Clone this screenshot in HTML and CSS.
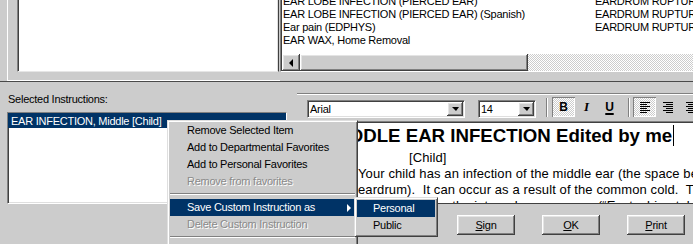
FILE: index.html
```html
<!DOCTYPE html>
<html lang="en">
<head>
  <meta charset="UTF-8" />
  <title>Patient Instructions</title>
  <link rel="stylesheet" href="styles.css">
</head>
<body>
  <div class="window">
    <div class="top">
      <div class="frame">
        <div class="blank"></div>
      </div>
      <div class="list">
        <div class="rows">
          <div class="rows-inner">
            <div class="row"><span class="c1">EAR LOBE INFECTION (PIERCED EAR)</span><span>EARDRUM RUPTURE</span></div>
            <div class="row"><span class="c1">EAR LOBE INFECTION (PIERCED EAR) (Spanish)</span><span>EARDRUM RUPTURE</span></div>
            <div class="row"><span class="c1">Ear pain (EDPHYS)</span><span>EARDRUM RUPTURE</span></div>
            <div class="row"><span class="c1">EAR WAX, Home Removal</span><span></span></div>
          </div>
        </div>
        <div class="hscroll">
          <div class="sb-btn raised"><span class="tri-left"></span></div>
          <div class="sb-thumb raised"></div>
          <div class="sb-track"></div>
        </div>
      </div>
    </div>

    <div class="bottom">
      <div class="left">
        <div class="label">Selected Instructions:</div>
        <div class="sel-list">
          <div class="sel-item">EAR INFECTION, Middle [Child]</div>
        </div>
      </div>

      <div class="right">
        <div class="toolbar">
          <div class="combo font-combo">
            <div class="combo-text">Arial</div>
            <div class="combo-btn raised"><span class="tri-down"></span></div>
          </div>
          <div class="combo size-combo">
            <div class="combo-text">14</div>
            <div class="combo-btn raised"><span class="tri-down"></span></div>
          </div>
          <div class="tb-sep first-sep"></div>
          <div class="tb-btn on"><b class="g-bold">B</b></div>
          <div class="tb-btn"><i class="g-italic">I</i></div>
          <div class="tb-btn"><u class="g-under">U</u></div>
          <div class="tb-sep"></div>
          <div class="tb-btn on">
            <svg width="10" height="11" viewBox="0 0 10 11"><path d="M0 .5h10M0 2.5h7M0 4.5h10M0 6.5h7M0 8.5h10M0 10.5h7" stroke="#000" stroke-width="1"/></svg>
          </div>
          <div class="tb-btn">
            <svg width="10" height="11" viewBox="0 0 10 11"><path d="M0 .5h10M3 2.5h7M0 4.5h10M3 6.5h7M0 8.5h10M3 10.5h7" stroke="#000" stroke-width="1"/></svg>
          </div>
          <div class="tb-btn">
            <svg width="10" height="11" viewBox="0 0 10 11"><path d="M0 .5h10M2 2.5h6M0 4.5h10M2 6.5h6M0 8.5h10M2 10.5h6" stroke="#000" stroke-width="1"/></svg>
          </div>
        </div>

        <div class="editor">
          <div class="doc-title">MIDDLE EAR INFECTION Edited by me<span class="caret"></span></div>
          <div class="doc-sub">[Child]</div>
          <div class="doc-p">Your child has an infection of the middle ear (the space behind the</div>
          <div class="doc-p">eardrum).  It can occur as a result of the common cold.  The</div>
          <div class="doc-p">infection blocks the internal ear passage (“Eustachian tube”).</div>
        </div>

        <div class="actions">
          <div class="btn raised"><u>S</u>ign</div>
          <div class="btn raised"><u>O</u>K</div>
          <div class="btn raised"><u>P</u>rint</div>
        </div>
      </div>
    </div>

    <div class="menu">
      <div class="mi">Remove Selected Item</div>
      <div class="mi">Add to Departmental Favorites</div>
      <div class="mi">Add to Personal Favorites</div>
      <div class="mi off">Remove from favorites</div>
      <div class="sep"></div>
      <div class="mi hl">Save Custom Instruction as<span class="arrow"></span></div>
      <div class="mi off">Delete Custom Instruction</div>
      <div class="sep"></div>
    </div>

    <div class="submenu">
      <div class="mi sub hl">Personal</div>
      <div class="mi sub">Public</div>
    </div>
  </div>
</body>
</html>
```

FILE: styles.css
```css
* {
  box-sizing: border-box;
}
body {
  margin: 0;
  background: #cccccc;
  font-family: "Liberation Sans", Arial, sans-serif;
  font-size: 11px;
  letter-spacing: -0.25px;
  color: #000;
  overflow: hidden;
}
.window {
  position: relative;
  width: 693px;
  height: 244px;
  overflow: hidden;
}
.raised {
  background: #cccccc;
  box-shadow: inset -1px -1px #404040, inset 1px 1px #fff, inset -2px -2px #808080, inset 2px 2px #e4e4e4;
}

/* top part */
.top {
  display: flex;
  height: 82px;
  border-bottom: 1px solid #4a4a4a;
}
.frame {
  margin-left: 7px;
  width: 273px;
  height: 81px;
  border-left: 1px solid #fff;
  border-bottom: 1px solid #fff;
  padding-left: 9px;
}
.blank {
  width: 262px;
  height: 72px;
  background: #fff;
  border-left: 1px solid #808080;
  border-right: 1px solid #404040;
  border-bottom: 1px solid #e6e6e6;
  box-shadow: inset 1px 0 #404040, inset -1px 0 #dfdfdf;
}
.list {
  flex: 1;
  height: 72px;
  background: #fff;
  border-left: 1px solid #808080;
  border-bottom: 1px solid #fff;
  box-shadow: inset 1px 0 #404040;
  padding-left: 1px;
  display: flex;
  flex-direction: column;
  overflow: hidden;
}
.rows {
  flex: 1;
  overflow: hidden;
  padding-left: 1px;
}
.rows-inner {
  margin-top: -5px;
}
.row {
  display: flex;
  height: 13px;
  line-height: 13px;
  white-space: nowrap;
}
.c1 {
  width: 312px;
  flex-shrink: 0;
}
.hscroll {
  height: 17px;
  display: flex;
  flex-shrink: 0;
}
.sb-btn {
  width: 18px;
  display: flex;
  align-items: center;
  justify-content: center;
}
.tri-left {
  width: 0;
  height: 0;
  border-right: 4px solid #000;
  border-top: 4px solid transparent;
  border-bottom: 4px solid transparent;
}
.sb-thumb {
  width: 228px;
}
.sb-track {
  flex: 1;
  background: repeating-conic-gradient(#fff 0 25%, #cccccc 0 50%) 0 0 / 2px 2px;
}

/* bottom part */
.bottom {
  display: flex;
  height: 162px;
}
.left {
  width: 290px;
  flex-shrink: 0;
  padding: 11px 0 0 7px;
}
.label {
  line-height: 13px;
  padding-left: 1px;
}
.sel-list {
  margin-top: 6px;
  width: 280px;
  height: 92px;
  background: #fff;
  border: 1px solid;
  border-color: #808080 #fff #fff #808080;
  box-shadow: inset 1px 1px #404040, inset -1px -1px #dfdfdf;
}
.sel-item {
  background: #003366;
  color: #fff;
  height: 15px;
  line-height: 16px;
  padding-left: 3px;
  white-space: nowrap;
}
.right {
  flex: 1;
  display: flex;
  flex-direction: column;
  padding-top: 11px;
  min-width: 0;
}
.toolbar {
  margin-left: 7px;
  height: 28px;
  flex-shrink: 0;
  border-top: 1px solid #808080;
  box-shadow: inset 0 1px #fff;
  display: flex;
  align-items: flex-start;
  padding-left: 10px;
}
.combo {
  margin-top: 6px;
  height: 18px;
  background: #fff;
  border: 1px solid;
  border-color: #808080 #fff #fff #808080;
  box-shadow: inset 1px 1px #404040, inset -1px -1px #dfdfdf;
  padding: 1px;
  display: flex;
  flex-shrink: 0;
}
.font-combo {
  width: 158px;
}
.size-combo {
  width: 58px;
  margin-left: 13px;
}
.combo-text {
  flex: 1;
  line-height: 14px;
  padding-left: 1px;
}
.combo-btn {
  width: 16px;
  height: 14px;
  display: flex;
  align-items: center;
  justify-content: center;
}
.tri-down {
  width: 0;
  height: 0;
  border-top: 4px solid #000;
  border-left: 4px solid transparent;
  border-right: 3px solid transparent;
}
.tb-sep {
  margin: 4px 3px 0 7px;
  width: 2px;
  height: 19px;
  border-left: 1px solid #808080;
  border-right: 1px solid #fff;
  flex-shrink: 0;
}
.first-sep {
  margin-left: 10px;
  margin-right: 4px;
}
.tb-btn {
  margin-top: 3px;
  width: 23px;
  height: 20px;
  flex-shrink: 0;
  display: flex;
  align-items: center;
  justify-content: center;
}
.tb-btn.on {
  box-shadow: inset 1px 1px #808080, inset -1px -1px #fff;
  background: repeating-conic-gradient(#fff 0 25%, #cccccc 0 50%) 0 0 / 2px 2px;
}
.g-bold {
  font-size: 12px;
  letter-spacing: 0;
}
.g-italic {
  font-family: "Liberation Serif", serif;
  font-weight: bold;
  font-size: 13px;
}
.g-under {
  font-weight: bold;
  font-size: 12px;
  text-decoration-thickness: 2px;
  text-underline-offset: 2px;
}
.editor {
  margin-left: 7px;
  height: 82px;
  flex-shrink: 0;
  background: #fff;
  border-top: 1px solid #808080;
  border-left: 1px solid #808080;
  box-shadow: inset 1px 1px #404040;
  padding-top: 3px;
  overflow: hidden;
  letter-spacing: 0;
}
.doc-title {
  font-weight: bold;
  font-size: 18.67px;
  line-height: 22px;
  padding-left: 31px;
  white-space: nowrap;
}
.caret {
  display: inline-block;
  width: 1px;
  height: 21px;
  margin-left: 1px;
  background: #000;
  vertical-align: top;
}
.doc-sub {
  margin-top: 3px;
  font-size: 13px;
  line-height: 16px;
  padding-left: 111px;
  letter-spacing: 0.1px;
}
.doc-p {
  font-size: 13px;
  line-height: 16px;
  padding-left: 60px;
  letter-spacing: 0.1px;
  white-space: pre;
}
.actions {
  flex: 1;
  border-top: 1px solid #404040;
  display: flex;
  justify-content: flex-end;
  align-items: flex-start;
  gap: 27px;
  padding: 11px 8px 0 0;
}
.btn {
  width: 58px;
  height: 20px;
  line-height: 20px;
  text-align: center;
}

/* popup menus */
.menu, .submenu {
  position: absolute;
  background: #cccccc;
  border: 1px solid;
  border-color: #dfdfdf #404040 #404040 #dfdfdf;
  box-shadow: inset 1px 1px #fff, inset -1px -1px #808080;
}
.menu {
  left: 167px;
  top: 120px;
  width: 191px;
  height: 140px;
  padding: 1px 2px 0 2px;
}
.submenu {
  left: 354px;
  top: 197px;
  width: 84px;
  height: 40px;
  padding: 2px 2px 0 2px;
}
.mi {
  position: relative;
  height: 17px;
  line-height: 17px;
  padding-left: 17px;
  white-space: nowrap;
}
.mi.sub {
  padding-left: 16px;
}
.mi.hl {
  background: #003366;
  color: #fff;
}
.mi.off {
  color: #8a8a8a;
  text-shadow: 1px 1px 0 #fff;
}
.arrow {
  position: absolute;
  right: 4px;
  top: 5px;
  width: 0;
  height: 0;
  border-left: 4px solid #fff;
  border-top: 4px solid transparent;
  border-bottom: 4px solid transparent;
}
.sep {
  height: 2px;
  margin: 3px 0 4px;
  border-top: 1px solid #808080;
  border-bottom: 1px solid #fff;
}
```
